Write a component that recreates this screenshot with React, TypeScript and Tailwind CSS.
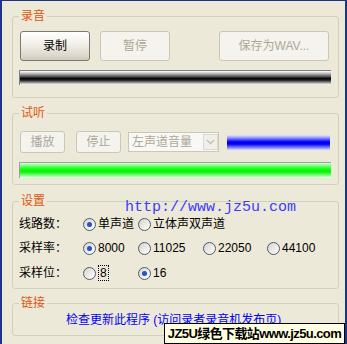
import React from 'react'

const FONT = "font-['Liberation_Sans','Noto_Sans_CJK_SC',sans-serif]"

function GroupBox({ title, className, children }: { title: string; className: string; children?: React.ReactNode }) {
  return (
    <div className={`relative ml-[10px] w-[327px] rounded-[3px] border border-[#D0D0BF] ${className}`}>
      <span className="absolute -top-[9px] left-[6px] bg-[#ECE9D8] px-[2px] text-[12px] leading-[16px] text-[#E0550F]">
        {title}
      </span>
      {children}
    </div>
  )
}

function XpButton({ label, w, h, enabled }: { label: string; w: string; h: string; enabled?: boolean }) {
  return (
    <div
      className={`flex items-center justify-center rounded-[3px] text-[12px] ${w} ${h} ${
        enabled
          ? 'border border-[#7A7A70] bg-[linear-gradient(#FFFFFF,#F3F1EA_40%,#D9D4C8_90%,#CFC9BC)] text-black'
          : 'border border-[#C9C7BA] bg-[#F4F3EE] text-[#ACA899]'
      }`}
    >
      {label}
    </div>
  )
}

function Radio({ checked, label, focus }: { checked?: boolean; label: string; focus?: boolean }) {
  return (
    <div className="flex items-center gap-[2px]">
      <span className="flex h-[13px] w-[13px] items-center justify-center rounded-full border border-[#4E5C6B] bg-[linear-gradient(135deg,#D6D4CA,#FFFFFF)]">
        {checked && <span className="h-[5px] w-[5px] rounded-full bg-[#2A50C8]" />}
      </span>
      <span className={`text-[12px] leading-[14px] text-black ${focus ? 'border border-dotted border-black px-[1px]' : ''}`}>
        {label}
      </span>
    </div>
  )
}

export default function App() {
  return (
    <div className={`relative h-[344px] w-[347px] overflow-hidden border-t border-r-2 border-l-2 border-[#1D3585] bg-[#ECE9D8] ${FONT}`}>
      {/* 录音 */}
      <GroupBox title="录音" className="mt-[15px] h-[82px]">
        <div className="ml-[7px] mt-[14px] flex">
          <XpButton label="录制" w="w-[70px]" h="h-[30px]" enabled />
          <div className="ml-[10px]">
            <XpButton label="暂停" w="w-[70px]" h="h-[30px]" />
          </div>
          <div className="ml-[49px]">
            <XpButton label="保存为WAV..." w="w-[110px]" h="h-[30px]" />
          </div>
        </div>
        <div className="ml-[6px] mt-[9px] h-[15px] w-[312px] border-t border-l border-[#808080] bg-[linear-gradient(#FFFFFF,#C8C8C8_15%,#6A6A6A_35%,#000000_55%,#3A3A3A_70%,#BDBDBD_88%,#FFFFFF)]" />
      </GroupBox>

      {/* 试听 */}
      <GroupBox title="试听" className="mt-[15px] h-[72px]">
        <div className="ml-[7px] mt-[17px] flex items-center">
          <XpButton label="播放" w="w-[45px]" h="h-[22px]" />
          <div className="ml-[11px]">
            <XpButton label="停止" w="w-[45px]" h="h-[22px]" />
          </div>
          <div className="ml-[7px] flex h-[20px] w-[91px] items-center border border-[#C9C7BA] bg-[#F8F8F4]">
            <span className="flex-1 pl-[3px] text-[12px] leading-[14px] text-[#ACA899]">左声道音量</span>
            <span className="flex h-[16px] w-[15px] items-center justify-center border border-[#DCDAD0] bg-[#F0EFEA]">
              <svg width="9" height="6" viewBox="0 0 9 6">
                <path d="M1 1 L4.5 4.5 L8 1" fill="none" stroke="#C8C6BA" strokeWidth="1.6" />
              </svg>
            </span>
          </div>
          <div className="ml-[8px] h-[15px] w-[103px] bg-[linear-gradient(#E4E4FF,#9090FF_20%,#0000FF_45%,#0000E8_60%,#8888FF_85%,#DADAFF)]" />
        </div>
        <div className="ml-[6px] mt-[9px] h-[16px] w-[312px] border-t border-l border-[#A0A0A0] bg-[linear-gradient(#D8FFD8,#70FF70_20%,#00FF00_45%,#10F010_60%,#90FF90_85%,#F0FFF0)]" />
      </GroupBox>

      {/* 设置 */}
      <GroupBox title="设置" className="mt-[16px] h-[88px]">
        <div className="absolute -top-[1px] left-[112px] font-['Liberation_Mono',monospace] text-[15px] leading-[14px] text-[#3C3CFF]">
          http://www.jz5u.com
        </div>
        <div className="ml-[6px] mt-[15px] flex flex-col gap-[10px] text-[12px] leading-[14px] text-black">
          <div className="flex items-center">
            <span className="w-[64px]">线路数：</span>
            <div className="w-[55px]">
              <Radio checked label="单声道" />
            </div>
            <Radio label="立体声双声道" />
          </div>
          <div className="flex items-center">
            <span className="w-[64px]">采样率：</span>
            <div className="w-[55px]">
              <Radio checked label="8000" />
            </div>
            <div className="w-[65px]">
              <Radio label="11025" />
            </div>
            <div className="w-[64px]">
              <Radio label="22050" />
            </div>
            <Radio label="44100" />
          </div>
          <div className="flex items-center">
            <span className="w-[64px]">采样位：</span>
            <div className="w-[55px]">
              <Radio label="8" focus />
            </div>
            <Radio checked label="16" />
          </div>
        </div>
      </GroupBox>

      {/* 链接 */}
      <GroupBox title="链接" className="mt-[14px] h-[33px]">
        <div className="ml-[53px] mt-[9px] text-[12px] leading-[14px] text-[#0000FF]">
          检查更新此程序 (访问录者录音机发布页)
        </div>
      </GroupBox>

      <div className="absolute bottom-0 right-0 flex h-[21px] w-[181px] items-center justify-center overflow-hidden whitespace-nowrap border border-black bg-[#FFFFE1] text-[13px] font-bold leading-[14px] tracking-[-0.6px] text-black">
        JZ5U绿色下载站www.jz5u.com
      </div>
    </div>
  )
}
